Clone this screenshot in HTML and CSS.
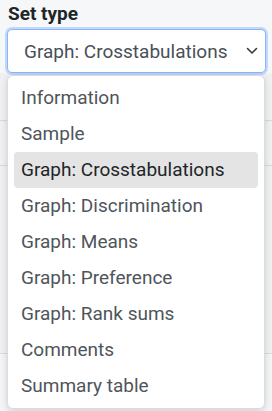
FILE: index.html
```html
<!DOCTYPE html>
<html>
<head>
<meta charset="utf-8">
<link rel="stylesheet" href="styles.css">
</head>
<body>
<div class="page">
  <label class="field-label">Set type</label>
  <div class="select-wrap">
    <div class="select">
      <span class="select-value">Graph: Crosstabulations</span>
      <svg class="chevron" width="12" height="8" viewBox="0 0 12 8"><path d="M1.5 1.5 L6 6 L10.5 1.5" fill="none" stroke="#343a40" stroke-width="1.6" stroke-linecap="round" stroke-linejoin="round"/></svg>
    </div>
    <ul class="menu">
      <li class="item">Information</li>
      <li class="item">Sample</li>
      <li class="item active">Graph: Crosstabulations</li>
      <li class="item">Graph: Discrimination</li>
      <li class="item">Graph: Means</li>
      <li class="item">Graph: Preference</li>
      <li class="item">Graph: Rank sums</li>
      <li class="item">Comments</li>
      <li class="item">Summary table</li>
    </ul>
  </div>
  <div class="behind">
    <div class="row r1"></div>
    <div class="row r2"></div>
    <div class="row r3"></div>
    <div class="row r4"></div>
  </div>
</div>
</body>
</html>
```

FILE: styles.css
```css
html, body {
  margin: 0;
  padding: 0;
  background: #f6f7f8;
  font-family: Roboto, "Liberation Sans", sans-serif;
}
.page {
  padding: 3px 6px 0 7px;
  width: 272px;
  min-height: 411px;
  box-sizing: border-box;
}
.field-label {
  display: block;
  font-weight: 700;
  font-size: 19px;
  line-height: 22px;
  color: #212529;
  padding-left: 1px;
  margin-bottom: 4px;
}
.select-wrap {
  position: relative;
}
.select {
  height: 44px;
  box-sizing: border-box;
  border: 1px solid #86b7fe;
  border-radius: 5px;
  background: #fff;
  box-shadow: 0 0 0 2px rgba(13, 110, 253, 0.22);
  display: flex;
  align-items: center;
  justify-content: space-between;
  padding: 0 7px 0 16px;
}
.select-value {
  font-size: 19px;
  color: #495057;
}
.chevron {
  display: block;
}
.menu {
  position: absolute;
  top: 46px;
  left: 0;
  width: 258px;
  box-sizing: border-box;
  margin: 0;
  padding: 4px 6px;
  list-style: none;
  background: #fff;
  border: 1px solid #dcdcdc;
  border-radius: 6px;
  box-shadow: 0 2px 6px rgba(0, 0, 0, 0.15);
  z-index: 2;
}
.item {
  height: 36px;
  line-height: 36px;
  padding-left: 7px;
  font-size: 19px;
  color: #4f555b;
  border-radius: 4px;
  white-space: nowrap;
}
.item.active {
  background: #e4e4e4;
  color: #212529;
}
.behind {
  margin: 0 -6px 0 -7px;
}
.row {
  border-bottom: 1px solid #d6d8db;
  background: #eef0f2;
}
.r1 { height: 47px; }
.r2 { height: 44px; }
.r3 { height: 187px; }
.r4 { height: 60px; background: #f3f4f5; border-bottom: none; }
```
